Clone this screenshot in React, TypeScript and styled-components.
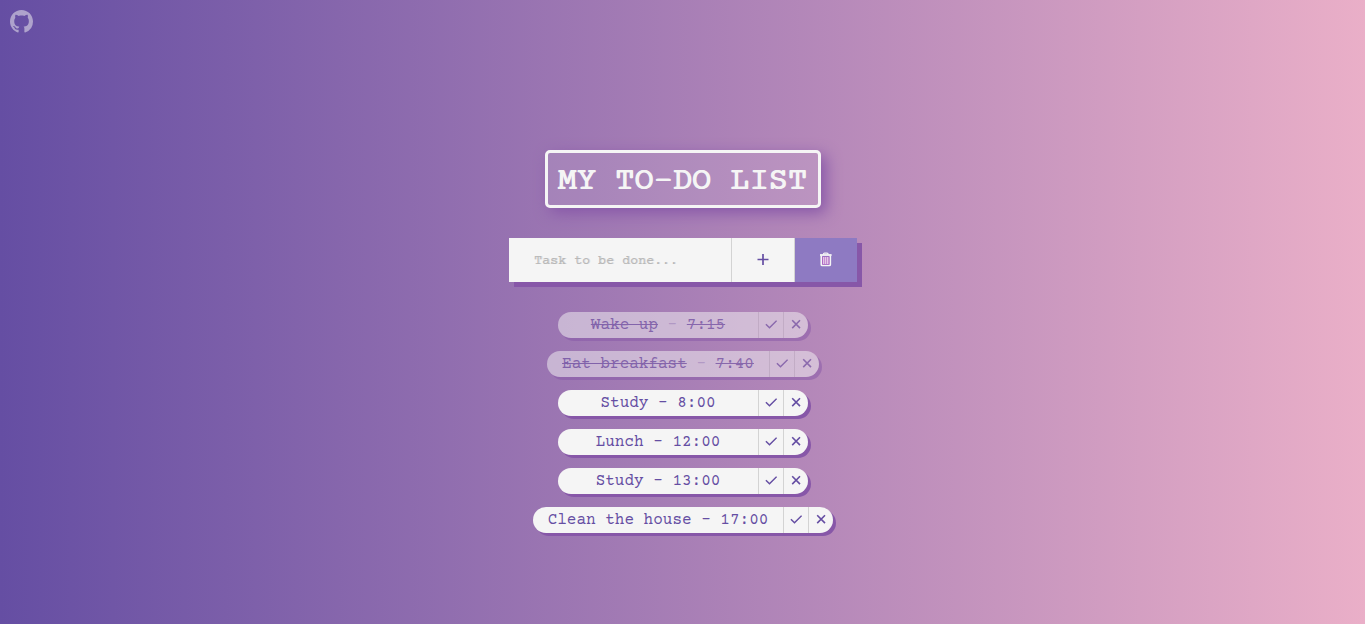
import React, { useState } from "react";
import styled, { createGlobalStyle } from "styled-components";

const GlobalStyle = createGlobalStyle`
  * { box-sizing: border-box; margin: 0; padding: 0; }
  body {
    min-height: 100vh;
    background: linear-gradient(to right, #654ea3, #eaafc8);
    font-family: "Courier Prime", "Courier New", "Liberation Mono", monospace;
    color: #654ea3;
  }
  button, input { font-family: inherit; border: 0; border-radius: 0; outline: 0; }
  button { cursor: pointer; color: inherit; }
`;

const RepoLink = styled.a`
  position: absolute;
  top: 10px;
  left: 10px;
  color: #f5f5f5;
  opacity: 0.5;
  svg { display: block; }
`;

const Page = styled.main`
  display: flex;
  flex-direction: column;
  align-items: center;
  gap: 30px;
  padding: 150px 15px 78px 16px;
`;

const Title = styled.h1`
  padding: 13px 10px 7px;
  border: 3px solid #f5f5f5;
  border-radius: 5px;
  background: rgba(255, 255, 255, 0.1);
  box-shadow: 5px 5px 15px #8757a8;
  color: #f5f5f5;
  font-size: 32px;
  font-weight: 500;
  line-height: 32px;
  text-shadow: -1px 0 0 currentColor;
`;

const TaskForm = styled.form`
  display: flex;
  height: 44px;
  box-shadow: 5px 5px 0 #8757a8;
`;

const TaskInput = styled.input`
  width: 222px;
  padding: 2px 25px 0;
  background: #f5f5f5;
  color: #654ea3;
  font-weight: 500;
  &::placeholder {
    color: #b8b8b8;
    opacity: 1;
    text-shadow: 1px 0 0 #dcdcdc;
  }
`;

const FormButton = styled.button<{ $filled?: boolean }>`
  display: flex;
  align-items: center;
  justify-content: center;
  width: 63px;
  border-left: 1px solid #d3d3d3;
  background: ${(p) => (p.$filled ? "#8e7ac2" : "#f5f5f5")};
  color: ${(p) => (p.$filled ? "#f5f5f5" : "#654ea3")};
`;

const TaskList = styled.ul`
  display: flex;
  flex-direction: column;
  align-items: center;
  gap: 13px;
  list-style: none;
`;

const TaskItem = styled.li<{ $done: boolean }>`
  display: flex;
  height: 26px;
  overflow: hidden;
  border-radius: 13px;
  background: #f5f5f5;
  box-shadow: 3px 3px 0 #8757a8;
  opacity: ${(p) => (p.$done ? 0.5 : 1)};
`;

const TaskText = styled.span`
  min-width: 200px;
  padding: 0 15px;
  font-size: 16px;
  font-weight: 500;
  line-height: 26px;
  text-align: center;
`;

const Words = styled.span<{ $done: boolean }>`
  text-decoration: ${(p) => (p.$done ? "line-through" : "none")};
`;

const Dash = styled.span<{ $done: boolean }>`
  opacity: ${(p) => (p.$done ? 0.4 : 1)};
`;

const TaskButton = styled.button`
  display: flex;
  align-items: center;
  justify-content: center;
  width: 25px;
  border-left: 1px solid #d3d3d3;
  background: transparent;
`;

const GithubIcon = () => (
  <svg width="23" height="23" viewBox="0 0 16 16" fill="currentColor" aria-hidden="true">
    <path d="M8 0C3.58 0 0 3.58 0 8c0 3.54 2.29 6.53 5.47 7.59.4.07.55-.17.55-.38 0-.19-.01-.82-.01-1.49-2.01.37-2.53-.49-2.69-.94-.09-.23-.48-.94-.82-1.13-.28-.15-.68-.52-.01-.53.63-.01 1.08.58 1.23.82.72 1.21 1.87.87 2.33.66.07-.52.28-.87.51-1.07-1.78-.2-3.64-.89-3.64-3.95 0-.87.31-1.59.82-2.15-.08-.2-.36-1.02.08-2.12 0 0 .67-.21 2.2.82.64-.18 1.32-.27 2-.27s1.36.09 2 .27c1.53-1.04 2.2-.82 2.2-.82.44 1.1.16 1.92.08 2.12.51.56.82 1.27.82 2.15 0 3.07-1.87 3.75-3.65 3.95.29.25.54.73.54 1.48 0 1.07-.01 1.93-.01 2.2 0 .21.15.46.55.38A8.01 8.01 0 0 0 16 8c0-4.42-3.58-8-8-8z" />
  </svg>
);

const PlusIcon = () => (
  <svg width="12" height="16" viewBox="0 0 12 16" fill="none" stroke="currentColor" strokeWidth="1.7" aria-hidden="true">
    <path d="M6 2v11M.5 7.5h11" />
  </svg>
);

const TrashIcon = () => (
  <svg width="14" height="16" viewBox="0 0 14 16" fill="none" stroke="currentColor" aria-hidden="true">
    <path d="M1 3h11.6" strokeWidth="1.8" />
    <path d="M4.4 2.6q0-1.5 1.2-1.5h2.4q1.2 0 1.2 1.5" strokeWidth="1.2" />
    <path d="M2.3 3.5v9q0 1 1 1h7q1 0 1-1v-9" strokeWidth="1.7" />
    <path d="M3.2 4.6h7.2v8H3.2z" fill="#b45fc4" stroke="none" />
    <path d="M4.8 5v7M6.8 5v7M8.8 5v7" strokeWidth="1" />
  </svg>
);

const CheckIcon = () => (
  <svg width="12" height="12" viewBox="0 0 12 12" fill="none" stroke="currentColor" strokeWidth="1.5" aria-hidden="true">
    <path d="M.9 5.2l3.6 3.5 7.1-7" />
  </svg>
);

const CrossIcon = () => (
  <svg width="10" height="12" viewBox="0 0 10 12" fill="none" stroke="currentColor" strokeWidth="1.6" aria-hidden="true">
    <path d="M1.2 1.3l7.8 7.8M9 1.3l-7.8 7.8" />
  </svg>
);

type Task = { id: number; text: string; done: boolean };

const initialTasks: Task[] = [
  { id: 1, text: "Wake up - 7:15", done: true },
  { id: 2, text: "Eat breakfast - 7:40", done: true },
  { id: 3, text: "Study - 8:00", done: false },
  { id: 4, text: "Lunch - 12:00", done: false },
  { id: 5, text: "Study - 13:00", done: false },
  { id: 6, text: "Clean the house - 17:00", done: false },
];

const TaskLabel = ({ text, done }: { text: string; done: boolean }) => (
  <TaskText>
    {text.split(" - ").map((part, index) => (
      <React.Fragment key={index}>
        {index > 0 && <Dash $done={done}>{" - "}</Dash>}
        <Words $done={done}>{part}</Words>
      </React.Fragment>
    ))}
  </TaskText>
);

export default function App() {
  const [tasks, setTasks] = useState(initialTasks);
  const [draft, setDraft] = useState("");

  const addTask = (event: React.FormEvent) => {
    event.preventDefault();
    if (!draft.trim()) return;
    setTasks([...tasks, { id: Date.now(), text: draft.trim(), done: false }]);
    setDraft("");
  };
  const toggle = (id: number) =>
    setTasks(tasks.map((t) => (t.id === id ? { ...t, done: !t.done } : t)));
  const remove = (id: number) => setTasks(tasks.filter((t) => t.id !== id));

  return (
    <>
      <GlobalStyle />
      <RepoLink href="https://github.com" aria-label="GitHub">
        <GithubIcon />
      </RepoLink>
      <Page>
        <Title>MY TO-DO LIST</Title>
        <TaskForm onSubmit={addTask}>
          <TaskInput
            type="text"
            aria-label="Task"
            placeholder="Task to be done..."
            value={draft}
            onChange={(e) => setDraft(e.target.value)}
          />
          <FormButton type="submit" aria-label="Add task"><PlusIcon /></FormButton>
          <FormButton type="button" $filled aria-label="Delete all tasks" onClick={() => setTasks([])}>
            <TrashIcon />
          </FormButton>
        </TaskForm>
        <TaskList>
          {tasks.map((task) => (
            <TaskItem key={task.id} $done={task.done}>
              <TaskLabel text={task.text} done={task.done} />
              <TaskButton type="button" aria-label="Complete task" onClick={() => toggle(task.id)}><CheckIcon /></TaskButton>
              <TaskButton type="button" aria-label="Delete task" onClick={() => remove(task.id)}><CrossIcon /></TaskButton>
            </TaskItem>
          ))}
        </TaskList>
      </Page>
    </>
  );
}
